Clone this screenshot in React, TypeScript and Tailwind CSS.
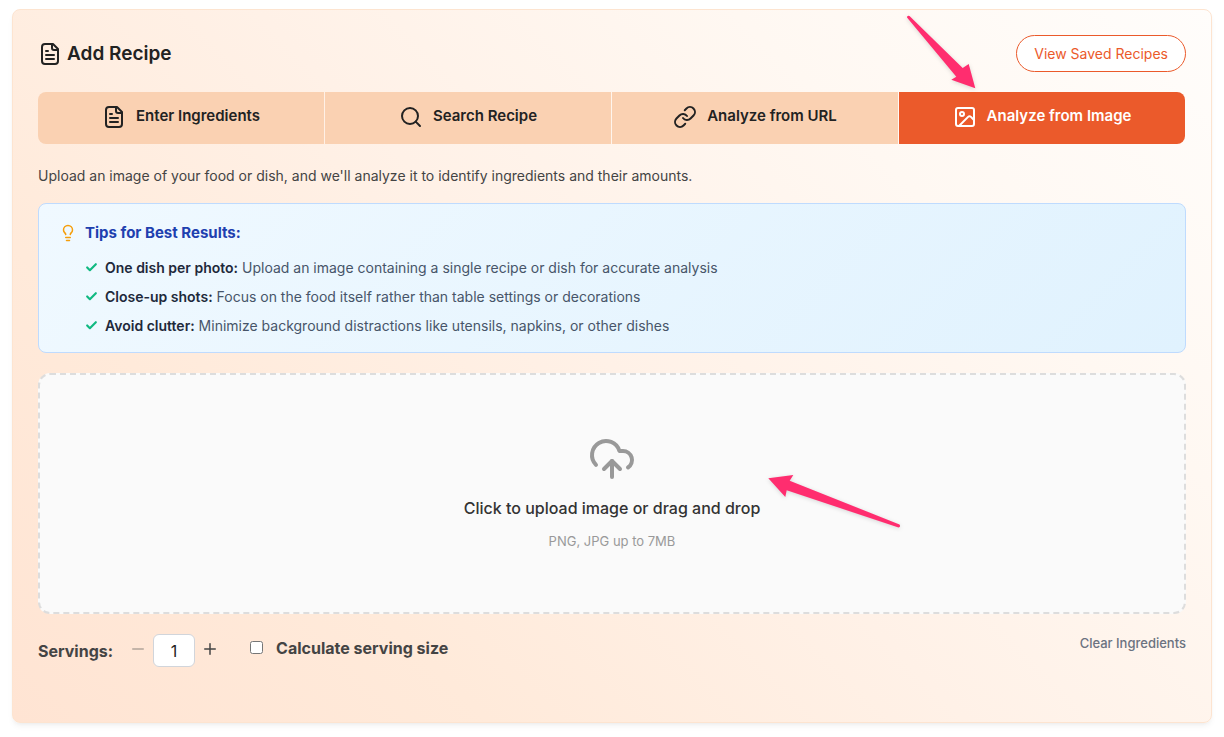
import React, { useState } from "react";
import {
  Check,
  CloudUpload,
  Image,
  Lightbulb,
  Link,
  Minus,
  Plus,
  Search,
} from "lucide-react";

interface IconProps {
  className?: string;
}

const DocumentIcon: React.FC<IconProps> = ({ className }) => (
  <svg
    className={className}
    viewBox="0 0 24 24"
    fill="none"
    stroke="currentColor"
    strokeWidth="2"
    strokeLinecap="round"
    strokeLinejoin="round"
    aria-hidden="true"
  >
    <path d="M15 2H7a3 3 0 0 0-3 3v14a3 3 0 0 0 3 3h10a3 3 0 0 0 3-3V7z" />
    <path d="M14 2v4a2 2 0 0 0 2 2h4M8 9h2M8 13h8M8 17h8" />
  </svg>
);

const tabs = [
  { label: "Enter Ingredients", icon: DocumentIcon },
  { label: "Search Recipe", icon: Search },
  { label: "Analyze from URL", icon: Link },
  { label: "Analyze from Image", icon: Image },
];

const tips = [
  {
    title: "One dish per photo:",
    text: "Upload an image containing a single recipe or dish for accurate analysis",
  },
  {
    title: "Close-up shots:",
    text: "Focus on the food itself rather than table settings or decorations",
  },
  {
    title: "Avoid clutter:",
    text: "Minimize background distractions like utensils, napkins, or other dishes",
  },
];

const App: React.FC = () => {
  const [active, setActive] = useState(3);
  const [servings, setServings] = useState(1);

  return (
    <main className="px-3 pt-[9px] pb-3 font-['Inter',sans-serif] text-[#444]">
      <section className="rounded-lg border border-[#fde4d0] bg-linear-[45deg,#ffe4d3,#ffeada_25%,#fff1e7_50%,#fff8f2_75%,#fffdfb] px-[25px] pt-[25px] pb-[55px] shadow-md shadow-black/5">
        <header className="flex items-center justify-between">
          <h1 className="flex items-center gap-[5px] text-[19px] leading-7 font-semibold text-[#222]">
            <DocumentIcon className="size-6" />
            Add Recipe
          </h1>
          <button className="h-[37px] rounded-full border border-[#eb5a2b] bg-white px-[17px] text-sm text-[#eb5a2b]">
            View Saved Recipes
          </button>
        </header>

        <div className="relative mt-5">
          <div className="mr-px grid grid-cols-4 gap-px overflow-hidden rounded-lg">
            {tabs.map(({ label, icon: Icon }, i) => (
              <button
                key={label}
                onClick={() => setActive(i)}
                className={`flex h-[52px] items-center justify-center gap-2.5 pb-[3px] text-[15px] font-semibold ${
                  i === active
                    ? "bg-[#eb5a2b] text-white"
                    : "bg-[#fad1b2] text-[#222]"
                }`}
              >
                <Icon className="size-6" />
                {label}
              </button>
            ))}
          </div>
          {/* arrow to the image tab */}
          <svg
            className="pointer-events-none absolute right-[206px] bottom-full h-20 w-20 overflow-visible drop-shadow-sm"
            viewBox="0 0 80 80"
            aria-hidden="true"
          >
            <path
              d="M7 5.500Q7 3 9.500 4L62.700 56 68.700 52 75.300 76.300 51.300 67.700 56.300 64.700Z"
              fill="#ff2d6f"
            />
          </svg>
        </div>

        <p className="mt-[22px] text-sm">
          Upload an image of your food or dish, and we'll analyze it to identify
          ingredients and their amounts.
        </p>

        <div className="mt-[17px] rounded-lg border border-[#bfdbfe] bg-linear-[135deg,#f0f9ff,#e0f2fe] px-5 pt-[17px] pb-4">
          <h2 className="flex items-center gap-2 text-[15px] leading-6 font-bold text-[#1e40af]">
            <Lightbulb className="size-[18px] text-[#f59e0b]" />
            Tips for Best Results:
          </h2>
          <ul className="mt-3 space-y-2 pl-[26px] text-sm leading-[21px] text-[#475569]">
            {tips.map((tip) => (
              <li key={tip.title} className="flex items-center gap-[7px]">
                <Check className="size-[13px] text-[#10b981]" strokeWidth={4} />
                <span>
                  <strong className="font-semibold text-[#1e293b]">
                    {tip.title}
                  </strong>{" "}
                  {tip.text}
                </span>
              </li>
            ))}
          </ul>
        </div>

        <div className="relative mt-5">
          <button className="flex h-[241px] w-full flex-col items-center justify-center rounded-xl border-2 border-dashed border-[#ddd] bg-[#fafafa]">
            <CloudUpload className="size-12 text-[#999]" />
            <span className="mt-[13px] text-base font-medium text-[#333]">
              Click to upload image or drag and drop
            </span>
            <span className="mt-3 text-[13px] text-[#999]">
              PNG, JPG up to 7MB
            </span>
          </button>
          {/* arrow to the upload area */}
          <svg
            className="pointer-events-none absolute top-24 left-1/2 ml-[152px] h-16 w-[140px] overflow-visible drop-shadow-sm"
            viewBox="0 0 140 64"
            aria-hidden="true"
          >
            <path
              d="M4.300 9.300 29.300 6 25.700 11.700 135.500 55.500Q137 58 134.500 58.500L22.700 21.300 21.300 28Z"
              fill="#ff2d6f"
            />
          </svg>
        </div>

        <div className="mt-5 flex items-start justify-between">
          <div className="flex items-center">
            <label htmlFor="servings" className="font-bold">
              Servings:
            </label>
            <button
              aria-label="Fewer servings"
              onClick={() => setServings(Math.max(1, servings - 1))}
              className="ml-4 pb-1 text-[#b3a59b]"
            >
              <Minus className="size-[18px]" />
            </button>
            <input
              id="servings"
              value={servings}
              onChange={(e) => setServings(Number(e.target.value) || 1)}
              className="ml-1.5 h-[33px] w-[42px] rounded-md border border-[#d1d5db] bg-white text-center text-base text-[#222]"
            />
            <button
              aria-label="More servings"
              onClick={() => setServings(servings + 1)}
              className="ml-1.5 pb-1"
            >
              <Plus className="size-[18px]" />
            </button>
            <label className="ml-[31px] flex items-center gap-[13px] pb-1.5 font-bold">
              <input type="checkbox" className="size-[13px]" />
              Calculate serving size
            </label>
          </div>
          <button className="text-[13px] font-medium text-[#6b7280]">
            Clear Ingredients
          </button>
        </div>
      </section>
    </main>
  );
};

export default App;
